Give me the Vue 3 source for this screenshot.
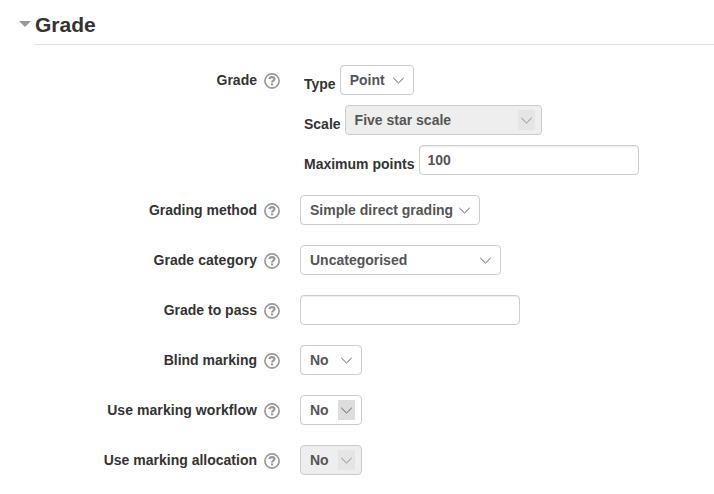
<script setup>
const rows = [
  { label: 'Grading method', type: 'select', value: 'Simple direct grading', width: 180 },
  { label: 'Grade category', type: 'select', value: 'Uncategorised', width: 201 },
  { label: 'Grade to pass', type: 'input', value: '', width: 220 },
  { label: 'Blind marking', type: 'select', value: 'No', width: 62 },
  { label: 'Use marking workflow', type: 'select', value: 'No', width: 62, state: 'hovered' },
  { label: 'Use marking allocation', type: 'select', value: 'No', width: 62, state: 'disabled' },
]
const groups = [
  {
    label: 'Grade',
    fields: [
      { sub: 'Type', type: 'select', value: 'Point', width: 74 },
      { sub: 'Scale', type: 'select', value: 'Five star scale', width: 197, state: 'disabled' },
      { sub: 'Maximum points', type: 'input', value: '100', width: 220 },
    ],
  },
  ...rows.map((r) => ({ label: r.label, fields: [r] })),
]
</script>

<template>
  <main class="page">
    <header class="heading">
      <svg class="caret" width="12" height="6" viewBox="0 0 12 6"><path d="M0 0H12L6 6Z" /></svg>
      <h3>Grade</h3>
    </header>
    <section class="form">
      <div v-for="g in groups" :key="g.label" class="row">
        <div class="label" :class="{ wide: g.label.endsWith('workflow') || g.label === 'Grade category' }">
          <span>{{ g.label }}</span>
          <svg class="help" width="16" height="16" viewBox="0 0 16 16">
            <circle cx="8" cy="8" r="7.1" />
            <path d="M5.5 6.2C5.6 4.8 6.6 4.2 8 4.2c1.5 0 2.5.7 2.5 1.9 0 1.6-2.4 1.6-2.4 3.4" />
            <rect x="7" y="10.4" width="2.2" height="2" />
          </svg>
        </div>
        <div class="fields">
          <div v-for="f in g.fields" :key="f.value" class="field">
            <span v-if="f.sub" class="sub" :class="f.type + '-sub'">{{ f.sub }}</span>
            <div class="control" :class="[f.type, f.state]" :style="{ width: f.width + 'px' }">
              <span class="value">{{ f.value }}</span>
              <span v-if="f.type === 'select'" class="arrow">
                <svg width="11" height="7" viewBox="0 0 11 7"><path d="M.3 .9L5.5 6L10.7 .9" /></svg>
              </span>
            </div>
          </div>
        </div>
      </div>
    </section>
  </main>
</template>

<style>
body {
  background: #fff;
}
</style>

<style scoped>
.page {
  width: 714px;
  height: 494px;
  overflow: hidden;
  font: bold 14px/20px "Liberation Sans", Arial, sans-serif;
  color: #333;
}
.heading {
  display: flex;
  box-sizing: border-box;
  height: 45px;
  margin-left: 19px;
  padding-top: 5px;
}
.caret {
  width: 12px;
  margin: 16px 4px 0 0;
  fill: #999;
}
h3 {
  flex: 1;
  margin: 0;
  font-size: 21px;
  line-height: 39px;
  border-bottom: 1px solid #ddd;
}
.form {
  display: flex;
  flex-direction: column;
  gap: 20px;
  padding-top: 20px;
}
.row {
  display: flex;
  gap: 20px;
}
.label {
  display: flex;
  justify-content: flex-end;
  align-items: center;
  gap: 7px;
  width: 280px;
  height: 30px;
  white-space: nowrap;
}
.wide {
  letter-spacing: 0.06px;
}
.help {
  margin-top: 1px;
  fill: none;
  stroke: #999;
  stroke-width: 1.7;
}
.help rect {
  fill: #999;
  stroke: none;
}
.help path {
  stroke-width: 2.2;
}
.fields {
  display: flex;
  flex-direction: column;
  gap: 10px;
}
.field {
  display: flex;
}
.sub {
  padding: 9px 4px 0;
  line-height: 20px;
  white-space: nowrap;
}
.input-sub {
  padding-right: 5px;
}
.control {
  box-sizing: border-box;
  display: flex;
  align-items: center;
  justify-content: space-between;
  height: 30px;
  border: 1px solid #ccc;
  border-radius: 4px;
  padding: 0 6px 0 9px;
  color: #555;
  background: #fff;
  white-space: nowrap;
}
.input {
  padding-left: 7px;
  box-shadow: inset 0 1px 1px rgba(0, 0, 0, 0.075);
}
.arrow {
  display: flex;
  align-items: center;
  justify-content: center;
  width: 17px;
  height: 20px;
}
.arrow path {
  fill: none;
  stroke: #555;
  stroke-width: 0.95;
}
.hovered .arrow {
  background: #ddd;
}
.disabled {
  background: #eee;
}
.disabled .arrow {
  background: #e5e5e5;
}
.disabled .arrow path {
  stroke: #888;
}
</style>
